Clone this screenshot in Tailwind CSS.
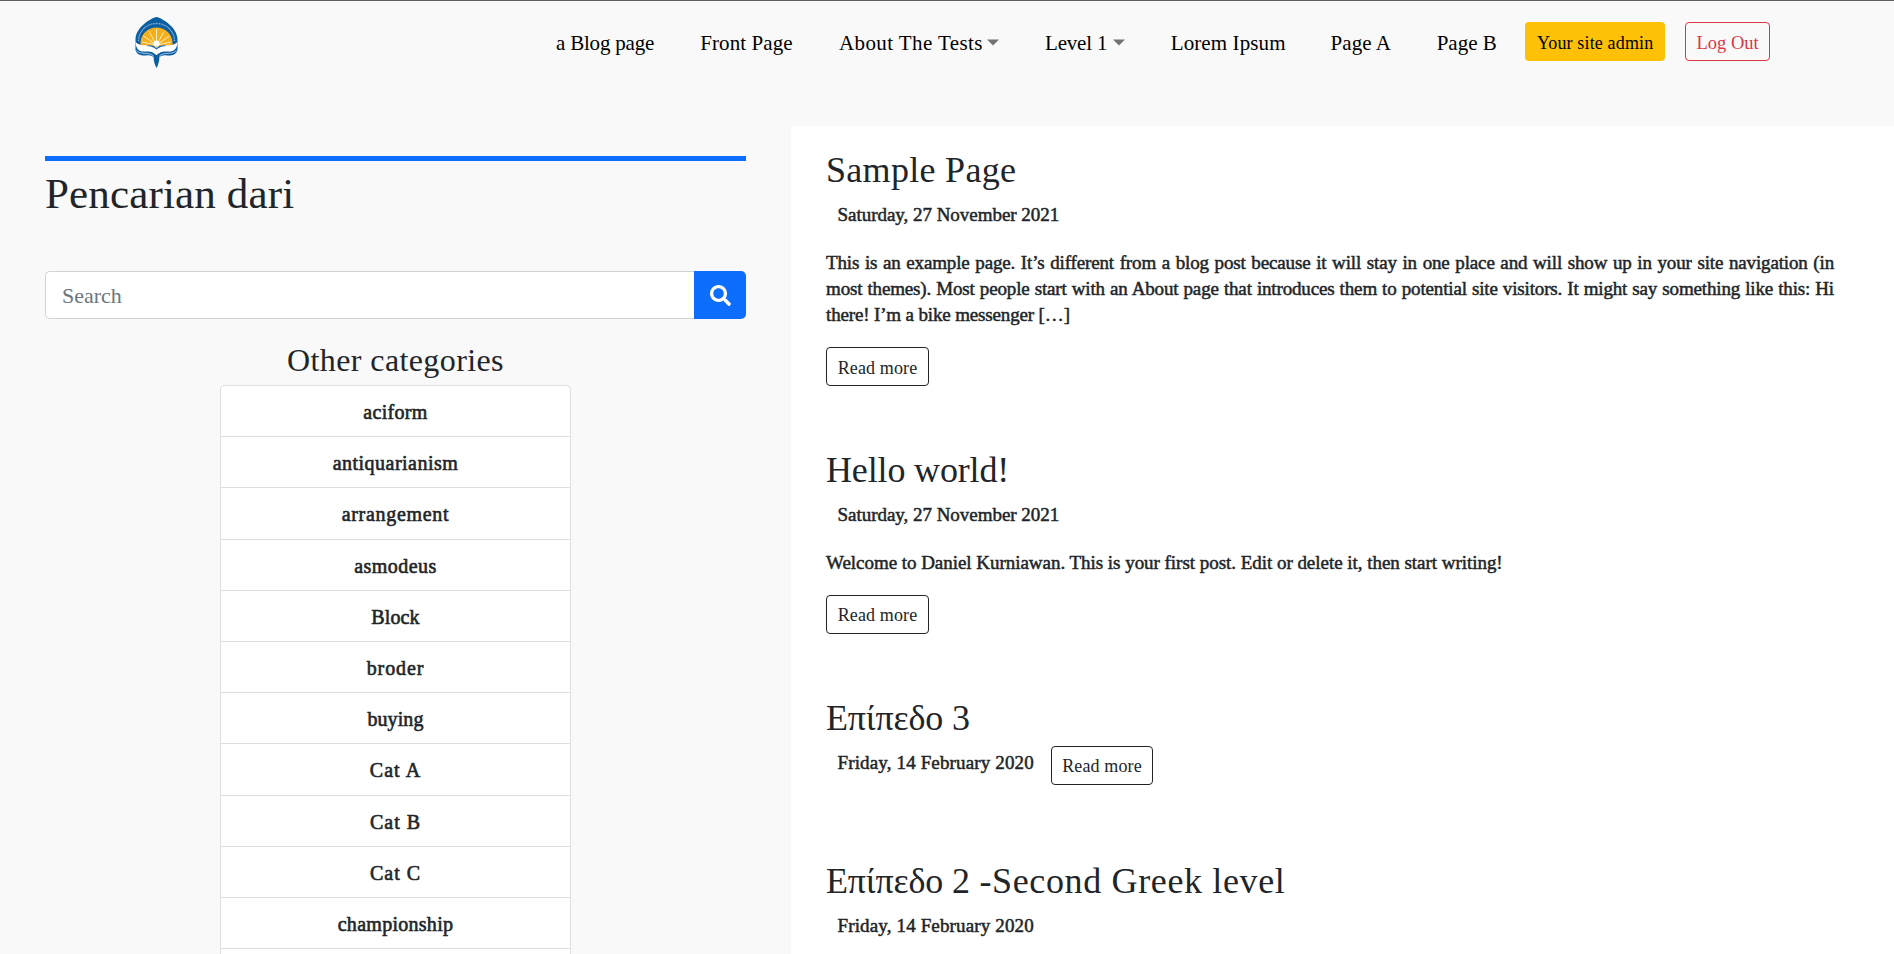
<!DOCTYPE html>
<html lang="en">
<head>
<meta charset="utf-8">
<title>Pencarian</title>
<script src="https://cdn.jsdelivr.net/npm/@tailwindcss/browser@4"></script>
</head>
<body class="h-[954px] w-[1894px] overflow-hidden bg-[#f9f9f9] font-['Liberation_Serif',serif] text-[#212529]">
<header class="flex h-[126px] items-start border-t border-[#5f5f61] pl-[135px]">
  <svg class="mt-[15.500px] h-[51px] w-[43px] shrink-0" viewBox="0 0 43 51">
    <path d="M21.500 0C27 1 42 10 42.500 22V33C41 38 36 39 32 38.500C28 38 25 39 24 41H19C18 39 15 38 11 38.500C7 39 2 38 .5 33V22C1 10 16 1 21.500 0Z" fill="#0c5ea3"/>
    <path d="M3.500 24A18 17.500 0 0 1 39.500 24" fill="none" stroke="#8fb6d6" stroke-width="1.300" stroke-dasharray="1 .6"/>
    <path d="M5.500 30V26A16 15.500 0 0 1 37.500 26V30Z" fill="#f5ae1c"/>
    <g stroke="#fff3cf" stroke-width=".9"><path d="M21.500 28V12M21.500 28L14 14.500M21.500 28L29 14.500M21.500 28L8.500 19M21.500 28L34.500 19M21.500 28L7 25M21.500 28L36 25"/></g>
    <circle cx="21.500" cy="26.500" r="3" fill="#fff"/>
    <path d="M.5 25C6 31 15 26 21.500 30.500C28 26 37 31 42.500 25C42 34 37 35 31 34.500C26 34.500 24 36 21.500 38.500C19 36 17 34.500 12 34.500C6 35 1 34 .5 25Z" fill="#fff"/>
    <path d="M11 29C15 27.500 19 28.500 21.500 31.500C24 28.500 28 27.500 32 29C28 29 24 30 21.500 32.500C19 30 15 29 11 29Z" fill="#0c5ea3"/>
    <path d="M1.500 33.500C6 38.500 14 34 19 39.500M41.500 33.500C37 38.500 29 34 24 39.500" fill="none" stroke="#e4eef6" stroke-width=".7"/>
    <path d="M19 39C20.500 37.500 22.500 37.500 24 39C24.500 42 24.500 45 21.500 51C18.500 45 18.500 42 19 39Z" fill="#0c5ea3"/>
  </svg>
  <nav class="ml-[378px] mt-[27px] flex shrink-0 gap-[45.700px] whitespace-nowrap text-[21px] leading-[30px] text-black">
    <a class="w-[98.500px] tracking-[-0.200px]">a Blog page</a>
    <a class="w-[93px] tracking-[0.100px]">Front Page</a>
    <a class="flex w-[160.500px] tracking-[0.420px]">About The Tests<svg class="ml-auto mt-[11px] h-[7px] w-[12px]" viewBox="0 0 12 7"><path d="M0 .5H12L6 6.500Z" fill="#737373"/></svg></a>
    <a class="flex w-[80px] tracking-[-0.200px]">Level 1<svg class="ml-auto mt-[11px] h-[7px] w-[12px]" viewBox="0 0 12 7"><path d="M0 .5H12L6 6.500Z" fill="#737373"/></svg></a>
    <a class="w-[114px] tracking-[0.100px]">Lorem Ipsum</a>
    <a class="w-[60.500px] tracking-[0.100px]">Page A</a>
    <a class="w-[60px]">Page B</a>
  </nav>
  <a class="ml-[28.500px] mt-[21px] h-[39px] w-[140px] shrink-0 whitespace-nowrap rounded bg-[#ffc107] pt-px text-center text-[18px] leading-[40px] tracking-[0.150px] text-black">Your site admin</a>
  <a class="ml-5 mt-[21px] h-[39px] w-[85px] shrink-0 whitespace-nowrap rounded border border-[#dc3545] text-center text-[18.500px] leading-[40px] text-[#dc3545]">Log Out</a>
</header>
<main class="flex h-[828px] overflow-hidden">
  <aside class="w-[791px] shrink-0 pl-[45px] pr-[45px] pt-[30px]">
    <div class="h-[5px] bg-[#0d6efd]"></div>
    <h1 class="mt-[8px] text-[43px] leading-[50px] tracking-[0.150px]">Pencarian dari</h1>
    <div class="mt-[52px] flex h-12">
      <div class="grow rounded-l-[5px] border border-r-0 border-[#ced4da] bg-white pl-4 text-[22px] leading-[48px] text-[#6c757d]">Search</div>
      <div class="flex w-[52px] items-center justify-center rounded-r-[5px] bg-[#0d6efd]">
        <svg class="size-[21px]" viewBox="0 0 512 512" fill="#fff"><path d="M505 442.700L405.300 343c-4.500-4.500-10.600-7-17-7H372c27.600-35.300 44-79.700 44-128C416 93.100 322.900 0 208 0S0 93.100 0 208s93.100 208 208 208c48.300 0 92.700-16.400 128-44v16.300c0 6.400 2.500 12.500 7 17l99.700 99.700c9.400 9.400 24.600 9.400 33.900 0l28.300-28.300c9.400-9.400 9.400-24.600.1-34zM208 336c-70.700 0-128-57.200-128-128 0-70.700 57.200-128 128-128 70.700 0 128 57.200 128 128 0 70.700-57.200 128-128 128z"/></svg>
      </div>
    </div>
    <h2 class="mt-[20.500px] text-center text-[32px] leading-10 tracking-[0.400px]">Other categories</h2>
    <ul class="mx-auto mt-[5.500px] w-[351px] rounded-t-[5px] border border-b-0 border-[#dfdfdf] bg-white text-center text-[20px] leading-[52px] [-webkit-text-stroke:0.6px_#212529]">
      <li class="h-[51.200px] border-b border-[#dfdfdf] tracking-[0.300px]">aciform</li>
      <li class="h-[51.200px] border-b border-[#dfdfdf] tracking-[0.480px]">antiquarianism</li>
      <li class="h-[51.200px] border-b border-[#dfdfdf] tracking-[0.700px]">arrangement</li>
      <li class="h-[51.200px] border-b border-[#dfdfdf] tracking-[0.440px]">asmodeus</li>
      <li class="h-[51.200px] border-b border-[#dfdfdf] tracking-[0.100px]">Block</li>
      <li class="h-[51.200px] border-b border-[#dfdfdf] tracking-[0.900px]">broder</li>
      <li class="h-[51.200px] border-b border-[#dfdfdf] tracking-[0.090px]">buying</li>
      <li class="h-[51.200px] border-b border-[#dfdfdf] tracking-[1.100px]">Cat A</li>
      <li class="h-[51.200px] border-b border-[#dfdfdf] tracking-[0.970px]">Cat B</li>
      <li class="h-[51.200px] border-b border-[#dfdfdf] tracking-[0.970px]">Cat C</li>
      <li class="h-[51.200px] border-b border-[#dfdfdf] tracking-[0.280px]">championship</li>
      <li class="h-[5px]"></li>
    </ul>
  </aside>
  <section class="grow bg-white pl-[35px] pr-[60px] pt-[22px]">
    <article>
      <h2 class="text-[36px] leading-[44px] tracking-[0.300px]">Sample Page</h2>
      <div class="ml-[11.500px] mt-[10px] text-[19px] leading-[26px] tracking-[-0.030px] [-webkit-text-stroke:0.5px_#212529]">Saturday, 27 November 2021</div>
      <p class="mt-[22px] text-justify text-[19px] leading-[26px] tracking-[-0.150px] [-webkit-text-stroke:0.5px_#212529]">This is an example page. It’s different from a blog post because it will stay in one place and will show up in your site navigation (in most themes). Most people start with an About page that introduces them to potential site visitors. It might say something like this: Hi there! I’m a bike messenger […]</p>
      <a class="mt-[19px] block h-[39px] w-[103px] whitespace-nowrap rounded border border-[#212529] pt-px text-center text-[18px] leading-[39px] tracking-[0.130px]">Read more</a>
    </article>
    <article class="mt-[62px]">
      <h2 class="text-[36px] leading-[44px] tracking-[-0.150px]">Hello world!</h2>
      <div class="ml-[11.500px] mt-[10px] text-[19px] leading-[26px] tracking-[-0.030px] [-webkit-text-stroke:0.5px_#212529]">Saturday, 27 November 2021</div>
      <p class="mt-[22px] whitespace-nowrap text-[19px] leading-[26px] tracking-[-0.035px] [-webkit-text-stroke:0.5px_#212529]">Welcome to Daniel Kurniawan. This is your first post. Edit or delete it, then start writing!</p>
      <a class="mt-[19px] block h-[39px] w-[103px] whitespace-nowrap rounded border border-[#212529] text-center text-[18px] leading-[39px] tracking-[0.130px]">Read more</a>
    </article>
    <article class="mt-[62px]">
      <h2 class="text-[36px] leading-[44px] tracking-[-0.150px]">Επίπεδο 3</h2>
      <div class="mt-[6px] flex">
        <div class="ml-[11.500px] mt-1 w-[213.500px] text-[19px] leading-[26px] tracking-[0.140px] [-webkit-text-stroke:0.5px_#212529]">Friday, 14 February 2020</div>
        <a class="block h-[39px] w-[102px] whitespace-nowrap rounded border border-[#212529] text-center text-[18px] leading-[39px] tracking-[0.130px]">Read more</a>
      </div>
    </article>
    <article class="mt-[74px]">
      <h2 class="whitespace-nowrap text-[36px] leading-[44px] tracking-[0.640px]"><span class="tracking-[-0.150px]">Επίπεδο 2</span> -Second Greek level</h2>
      <div class="ml-[11.500px] mt-[9.500px] text-[19px] leading-[26px] tracking-[0.140px] [-webkit-text-stroke:0.5px_#212529]">Friday, 14 February 2020</div>
    </article>
  </section>
</main>
</body>
</html>
